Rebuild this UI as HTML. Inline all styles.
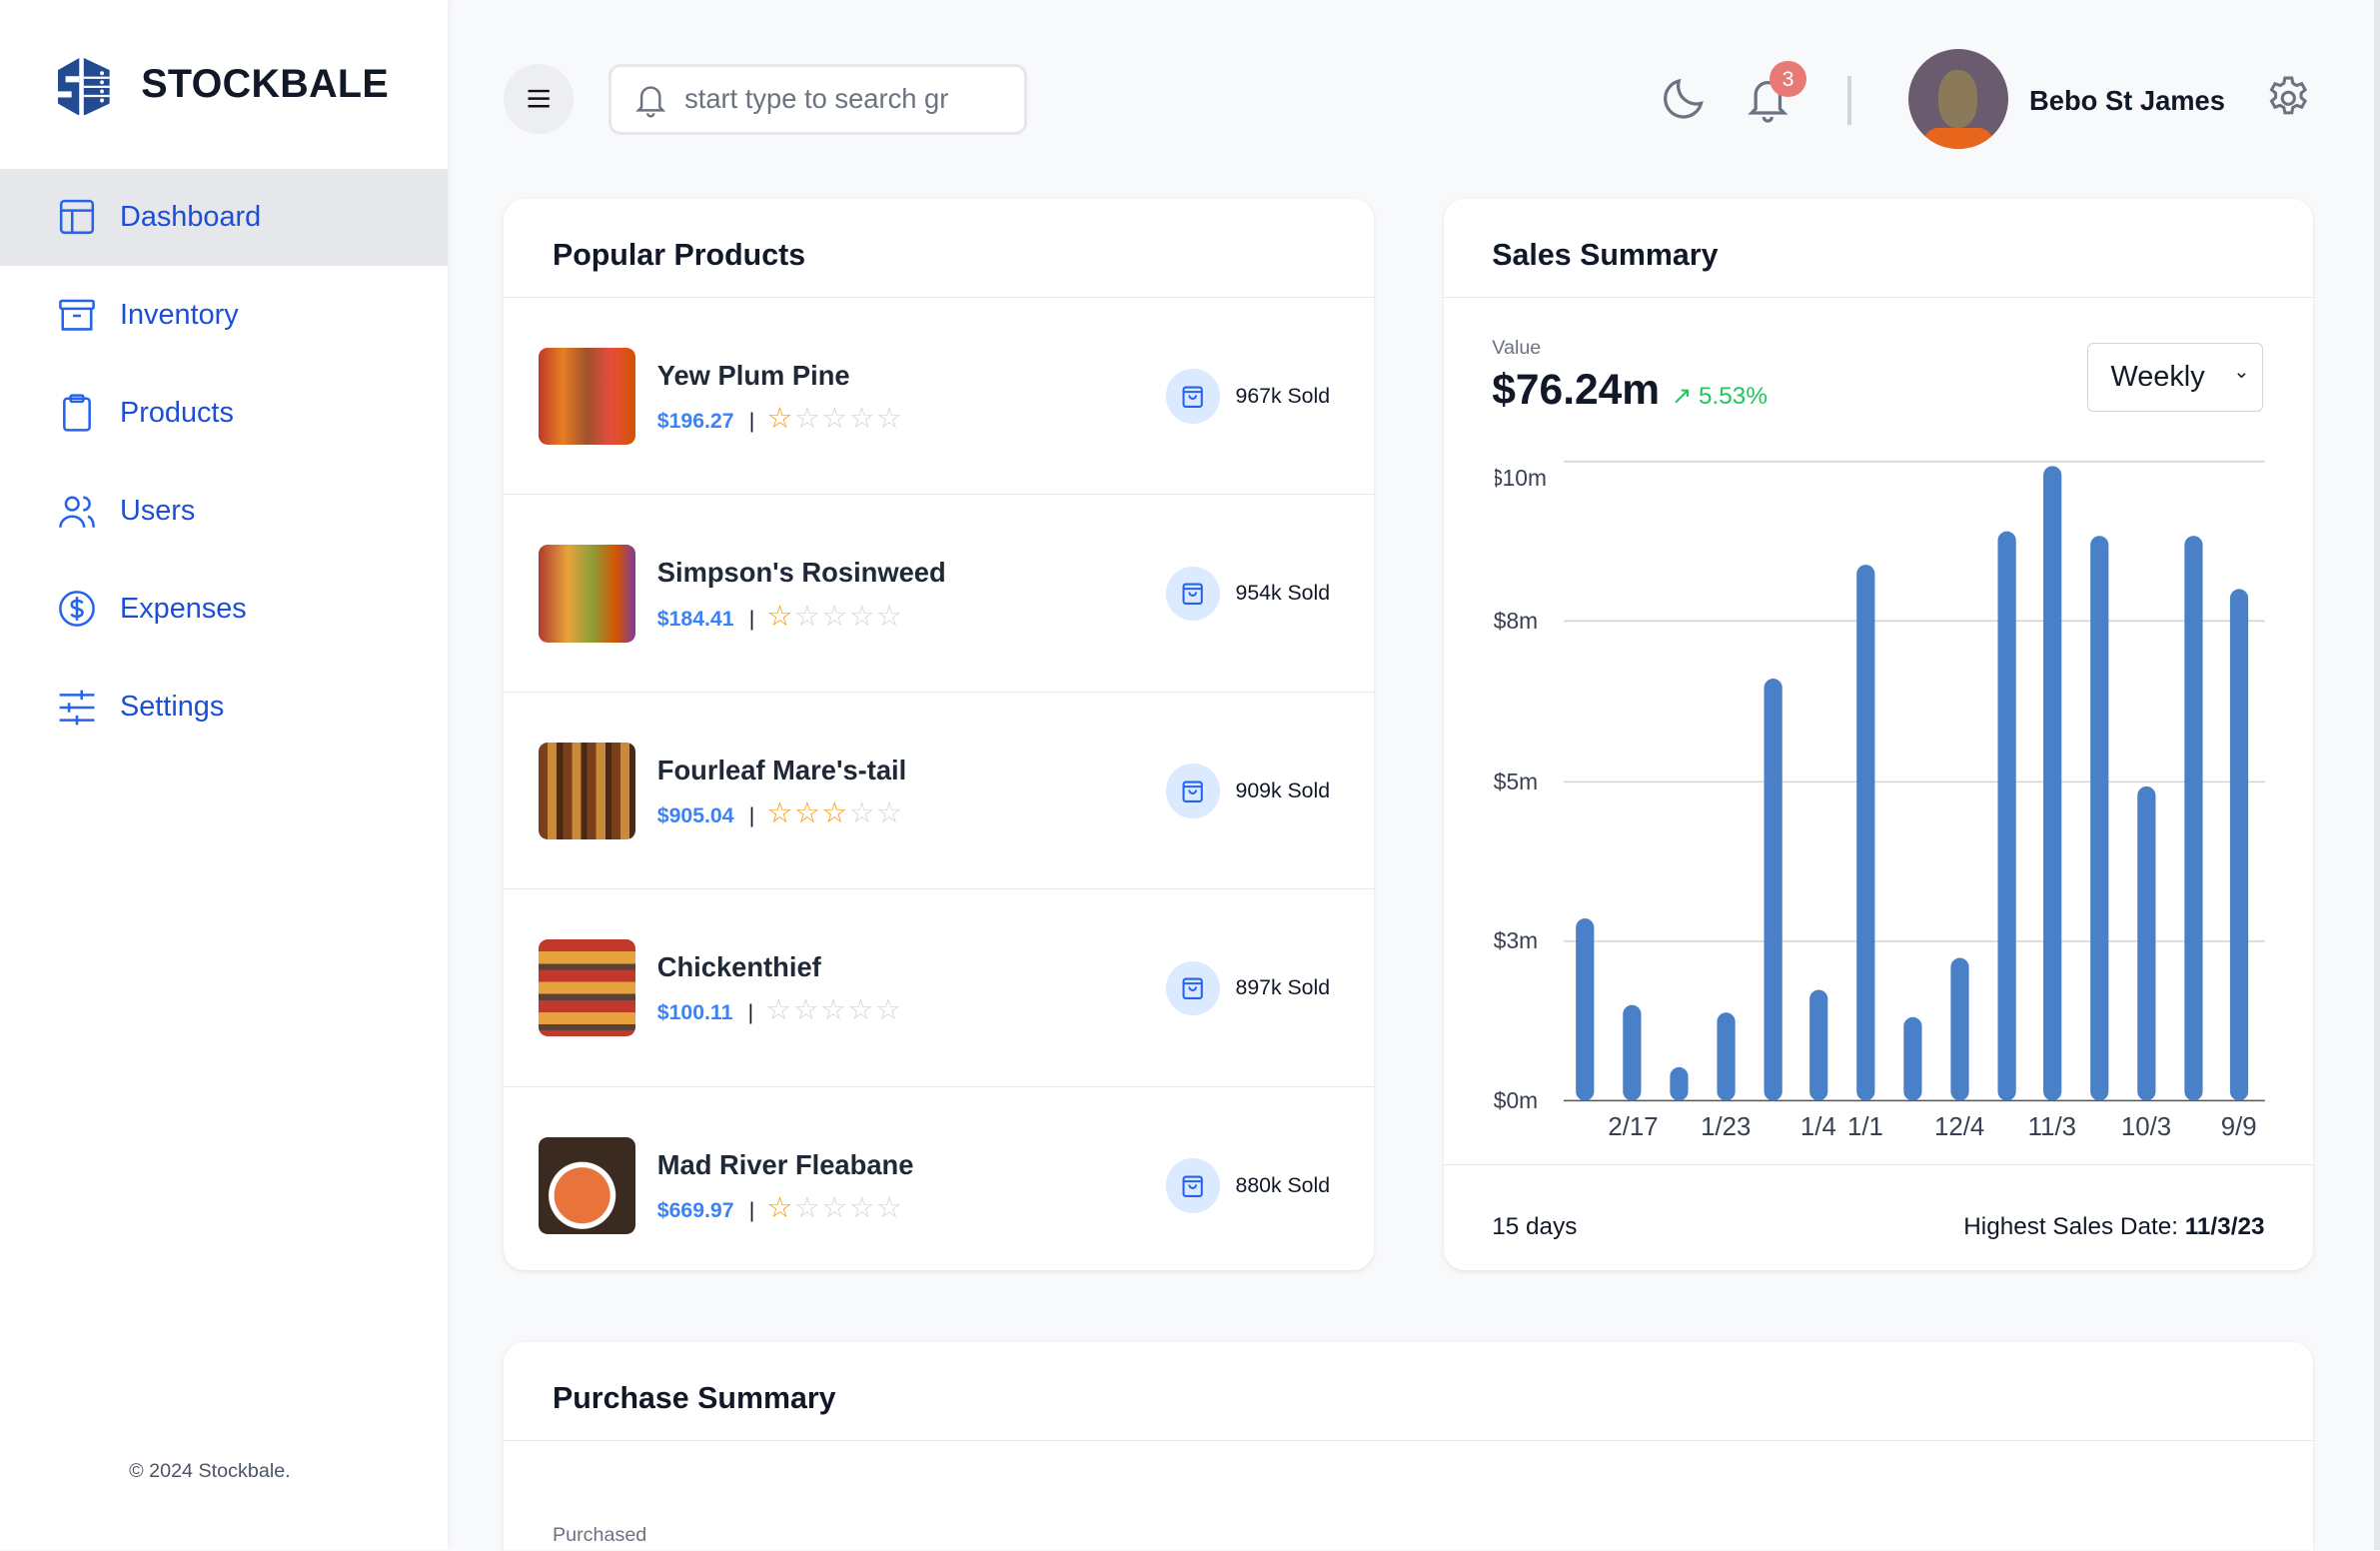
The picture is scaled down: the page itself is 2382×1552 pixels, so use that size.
<!DOCTYPE html>
<html><head><meta charset="utf-8"><style>
*{box-sizing:border-box;margin:0;padding:0}
html,body{width:2382px;height:1552px;overflow:hidden}
body{font-family:"Liberation Sans",Arial,sans-serif;background:#f8f9fb}
#r{zoom:1.5191;width:1568px;height:1021px;position:relative;overflow:hidden;background:#f8f9fb;color:#111827}
.sb{position:absolute;left:0;top:0;width:295px;height:1021px;background:#fff;box-shadow:1px 0 4px rgba(0,0,0,.05)}
.logo{position:absolute;left:38px;top:38px}
.brand{position:absolute;left:93px;top:41px;font-size:26px;font-weight:700;color:#111827;letter-spacing:.2px}
.nav{position:absolute;left:0;width:295px;height:64px;display:flex;align-items:center;padding-left:38px;font-size:19px;color:#1d4ed8}
.nav svg{margin-right:16px}
.nav.act{background:#e5e7eb}
.copy{position:absolute;left:85px;top:962px;font-size:13px;color:#4b5563}
.card{position:absolute;background:#fff;border-radius:14px;box-shadow:0 1px 4px rgba(0,0,0,.08)}
.ch{height:65px;border-bottom:1px solid #e5e7eb;padding:26px 32px 0;font-size:20px;font-weight:700}
.prow{height:130px;border-bottom:1px solid #e5e7eb;position:relative}
.img{position:absolute;left:23px;top:33px;width:64px;height:64px;border-radius:6px}
.pn{position:absolute;left:101px;top:41px;font-size:18px;font-weight:700;color:#1f2937}
.pp{position:absolute;left:101px;top:68px;font-size:14px;font-weight:700;color:#3b82f6}
.pp span{color:#111827;font-weight:400;margin:0 8px 0 10px}
.st{color:#f59e0b;letter-spacing:1px;font-size:19px;font-weight:400}
.st i{font-style:normal;color:#d1d5db}
.sold{position:absolute;left:436px;top:47px;display:flex;align-items:center;font-size:14px;color:#111827}
.bag{width:36px;height:36px;border-radius:50%;background:#dbeafe;display:flex;align-items:center;justify-content:center;margin-right:10px}
.yl{position:absolute;font-size:15px;color:#374151;right:0}
.xl{position:absolute;top:733px;font-size:17px;color:#374151;transform:translateX(-50%)}
</style></head><body><div id="r">
<div class="sb">
<svg class="logo" width="36" height="38" viewBox="0 0 36 38"><polygon points="14,0 0,8 0,30 14,38" fill="#234b92"/><polygon points="17,0 34,8 34,30 17,38" fill="#234b92"/><rect x="5" y="12" width="9" height="4" fill="#fff"/><rect x="0" y="22" width="9" height="4" fill="#fff"/><line x1="17" y1="13" x2="34" y2="13" stroke="#fff" stroke-width="1.5"/><line x1="17" y1="19" x2="34" y2="19" stroke="#fff" stroke-width="1.5"/><line x1="17" y1="25" x2="34" y2="25" stroke="#fff" stroke-width="1.5"/><circle cx="29" cy="10" r="1.3" fill="#fff"/><circle cx="29" cy="16" r="1.3" fill="#fff"/><circle cx="29" cy="22" r="1.3" fill="#fff"/><circle cx="29" cy="28" r="1.3" fill="#fff"/></svg>
<div class="brand">STOCKBALE</div>
<div class="nav act" style="top:111px"><svg width="25" height="25" viewBox="0 0 24 24" fill="none" stroke="#2563eb" stroke-width="1.6"><rect x="2" y="2" width="20" height="20" rx="2"/><path d="M2 8h20M9 8v14"/></svg>Dashboard</div>
<div class="nav" style="top:176px"><svg width="25" height="25" viewBox="0 0 24 24" fill="none" stroke="#2563eb" stroke-width="1.6"><rect x="1.5" y="2.5" width="21" height="5" rx="1"/><path d="M3 7.5v13h18v-13M9.5 12h5"/></svg>Inventory</div>
<div class="nav" style="top:240px"><svg width="25" height="25" viewBox="0 0 24 24" fill="none" stroke="#2563eb" stroke-width="1.6"><rect x="4" y="3" width="16" height="20" rx="2"/><rect x="8" y="1" width="8" height="4" rx="1"/></svg>Products</div>
<div class="nav" style="top:305px"><svg width="25" height="25" viewBox="0 0 24 24" fill="none" stroke="#2563eb" stroke-width="1.6"><circle cx="9" cy="7" r="4"/><path d="M1.5 22c0-4 3.5-7 7.5-7s7.5 3 7.5 7M16 3a4 4 0 010 8M19 15c2.5 1 3.5 3.5 3.5 7"/></svg>Users</div>
<div class="nav" style="top:369px"><svg width="25" height="25" viewBox="0 0 24 24" fill="none" stroke="#2563eb" stroke-width="1.6"><circle cx="12" cy="12" r="10.5"/><path d="M15.5 8.5c-.5-1-1.8-1.5-3.5-1.5-2 0-3.3 1-3.3 2.5s1.3 2 3.3 2.5 3.5 1 3.5 2.5-1.5 2.5-3.5 2.5c-1.8 0-3-.6-3.6-1.6M12 4.5v15"/></svg>Expenses</div>
<div class="nav" style="top:434px"><svg width="25" height="25" viewBox="0 0 24 24" fill="none" stroke="#2563eb" stroke-width="1.6"><path d="M1 4h22M1 12h22M1 20h22"/><path d="M15 1v6M7 9v6M12 17v6" /></svg>Settings</div>
<div class="copy">© 2024 Stockbale.</div>
</div>

<div style="position:absolute;left:332px;top:42px;width:46px;height:46px;border-radius:50%;background:#eceef1;display:flex;align-items:center;justify-content:center"><svg width="16" height="14" viewBox="0 0 16 14" stroke="#111" stroke-width="1.6"><path d="M1 2h14M1 7h14M1 12h14"/></svg></div>
<div style="position:absolute;left:401px;top:42px;width:276px;height:47px;border:2px solid #e5e7eb;border-radius:8px;background:#fff;display:flex;align-items:center;padding-left:14px;font-size:18px;color:#6b7280"><svg width="24" height="26" viewBox="0 0 24 24" fill="none" stroke="#6b7280" stroke-width="1.6" style="margin-right:10px"><path d="M6 17V10a6 6 0 0112 0v7l2 2H4z M10 21a2 2 0 004 0"/></svg>start type to search gr</div>
<svg style="position:absolute;left:1094px;top:48px" width="32" height="32" viewBox="0 0 24 24" fill="none" stroke="#6b7280" stroke-width="1.6"><path d="M20 15A9 9 0 019 4a9 9 0 1011 11z"/></svg>
<svg style="position:absolute;left:1149px;top:48px" width="32" height="34" viewBox="0 0 24 24" fill="none" stroke="#6b7280" stroke-width="1.6"><path d="M6 17V10a6 6 0 0112 0v7l2 2H4z M10 21a2 2 0 004 0"/></svg>
<div style="position:absolute;left:1166px;top:40px;width:24px;height:24px;border-radius:50%;background:#e87a75;color:#fff;font-size:14px;text-align:center;line-height:24px">3</div>
<div style="position:absolute;left:1217px;top:50px;width:3px;height:32px;background:#d1d5db"></div>
<div style="position:absolute;left:1257px;top:32px;width:66px;height:66px;border-radius:50%;background:#6b5b6e;overflow:hidden"><div style="position:absolute;left:20px;top:14px;width:26px;height:38px;border-radius:45%;background:#8a7a5a"></div><div style="position:absolute;left:10px;top:52px;width:46px;height:20px;border-radius:10px;background:#e8651c"></div></div>
<div style="position:absolute;left:1337px;top:56px;font-size:18px;font-weight:700;color:#111827">Bebo St James</div>
<svg style="position:absolute;left:1492px;top:49px" width="32" height="32" viewBox="0 0 24 24" fill="none" stroke="#6b7280" stroke-width="1.5"><path d="M10.3 2h3.4l.5 2.6 1.9 1.1 2.5-.9 1.7 3-2 1.7v2.2l2 1.7-1.7 3-2.5-.9-1.9 1.1-.5 2.6h-3.4l-.5-2.6-1.9-1.1-2.5.9-1.7-3 2-1.7v-2.2l-2-1.7 1.7-3 2.5.9 1.9-1.1z"/><circle cx="12" cy="12" r="3"/></svg>

<div class="card" style="left:332px;top:131px;width:573px;height:706px;overflow:hidden">
<div class="ch">Popular Products</div>
<div class="prow"><div class="img" style="background:linear-gradient(90deg,#c0392b,#e67e22 25%,#a0522d 50%,#e74c3c 75%,#d35400)"></div><div class="pn">Yew Plum Pine</div><div class="pp">$196.27<span>|</span><b class="st">☆<i>☆☆☆☆</i></b></div><div class="sold"><div class="bag"><svg width="18" height="18" viewBox="0 0 24 24" fill="none" stroke="#2563eb" stroke-width="1.8"><rect x="4" y="4" width="16" height="17" rx="2"/><path d="M4 8h16M9 11a3 3 0 006 0"/></svg></div>967k Sold</div></div>
<div class="prow"><div class="img" style="background:linear-gradient(90deg,#b03a2e,#e9a23b 30%,#8e9f3a 55%,#d35400 80%,#7d3c98)"></div><div class="pn">Simpson's Rosinweed</div><div class="pp">$184.41<span>|</span><b class="st">☆<i>☆☆☆☆</i></b></div><div class="sold"><div class="bag"><svg width="18" height="18" viewBox="0 0 24 24" fill="none" stroke="#2563eb" stroke-width="1.8"><rect x="4" y="4" width="16" height="17" rx="2"/><path d="M4 8h16M9 11a3 3 0 006 0"/></svg></div>954k Sold</div></div>
<div class="prow"><div class="img" style="background:repeating-linear-gradient(90deg,#7b3f1c 0 6px,#c98a3a 6px 12px,#4a2a14 12px 16px)"></div><div class="pn">Fourleaf Mare's-tail</div><div class="pp">$905.04<span>|</span><b class="st">☆☆☆<i>☆☆</i></b></div><div class="sold"><div class="bag"><svg width="18" height="18" viewBox="0 0 24 24" fill="none" stroke="#2563eb" stroke-width="1.8"><rect x="4" y="4" width="16" height="17" rx="2"/><path d="M4 8h16M9 11a3 3 0 006 0"/></svg></div>909k Sold</div></div>
<div class="prow"><div class="img" style="background:repeating-linear-gradient(180deg,#c0392b 0 8px,#e6a23c 8px 16px,#5d4037 16px 20px)"></div><div class="pn">Chickenthief</div><div class="pp">$100.11<span>|</span><b class="st"><i>☆☆☆☆☆</i></b></div><div class="sold"><div class="bag"><svg width="18" height="18" viewBox="0 0 24 24" fill="none" stroke="#2563eb" stroke-width="1.8"><rect x="4" y="4" width="16" height="17" rx="2"/><path d="M4 8h16M9 11a3 3 0 006 0"/></svg></div>897k Sold</div></div>
<div class="prow" style="border:none"><div class="img" style="background:radial-gradient(circle at 45% 60%,#e8743b 0 35%,#fff 36% 42%,#3b2a20 43%)"></div><div class="pn">Mad River Fleabane</div><div class="pp">$669.97<span>|</span><b class="st">☆<i>☆☆☆☆</i></b></div><div class="sold"><div class="bag"><svg width="18" height="18" viewBox="0 0 24 24" fill="none" stroke="#2563eb" stroke-width="1.8"><rect x="4" y="4" width="16" height="17" rx="2"/><path d="M4 8h16M9 11a3 3 0 006 0"/></svg></div>880k Sold</div></div>
</div>

<div class="card" style="left:951px;top:131px;width:573px;height:706px;overflow:hidden">
<div class="ch">Sales Summary</div>
<div style="position:absolute;left:32px;top:91px;font-size:13px;color:#6b7280">Value</div>
<div style="position:absolute;left:32px;top:110px;font-size:28px;font-weight:700">$76.24m <span style="font-size:16px;font-weight:400;color:#22c55e">↗ 5.53%</span></div>
<div style="position:absolute;left:424px;top:95px;width:116px;height:45px;border:1px solid #d1d5db;border-radius:4px;font-size:19px;padding:11px 0 0 15px">Weekly<span style="position:absolute;right:8px;top:10px;font-size:13px">⌄</span></div>
<div style="position:absolute;left:0;top:636px;width:573px;border-top:1px solid #e5e7eb"></div>
<div style="position:absolute;left:32px;top:668px;font-size:16px">15 days</div>
<div style="position:absolute;right:32px;top:668px;font-size:16px">Highest Sales Date: <b>11/3/23</b></div>
</div>
<div style="position:absolute;left:951px;top:0;width:573px;height:760px">
<svg style="position:absolute;left:0;top:0" width="573" height="760">
<g stroke="#d1d5db" stroke-width="1"><line x1="79" y1="304" x2="541" y2="304"/><line x1="79" y1="409" x2="541" y2="409"/><line x1="79" y1="515" x2="541" y2="515"/><line x1="79" y1="620" x2="541" y2="620"/></g>
<line x1="79" y1="725" x2="541" y2="725" stroke="#555"/>
<g fill="#4a80c8">
<rect x="87" y="605" width="12" height="120" rx="6"/><rect x="118" y="662" width="12" height="63" rx="6"/><rect x="149" y="703" width="12" height="22" rx="6"/><rect x="180" y="667" width="12" height="58" rx="6"/><rect x="211" y="447" width="12" height="278" rx="6"/><rect x="241" y="652" width="12" height="73" rx="6"/><rect x="272" y="372" width="12" height="353" rx="6"/><rect x="303" y="670" width="12" height="55" rx="6"/><rect x="334" y="631" width="12" height="94" rx="6"/><rect x="365" y="350" width="12" height="375" rx="6"/><rect x="395" y="307" width="12" height="418" rx="6"/><rect x="426" y="353" width="12" height="372" rx="6"/><rect x="457" y="518" width="12" height="207" rx="6"/><rect x="488" y="353" width="12" height="372" rx="6"/><rect x="518" y="388" width="12" height="337" rx="6"/>
</g></svg>
<div class="yl" style="left:34px;top:306px;width:34px;text-align:right;overflow:hidden;direction:rtl">$10m</div>
<div class="yl" style="left:33px;top:400px">$8m</div>
<div class="yl" style="left:33px;top:506px">$5m</div>
<div class="yl" style="left:33px;top:611px">$3m</div>
<div class="yl" style="left:33px;top:716px">$0m</div>
<div class="xl" style="left:125px">2/17</div><div class="xl" style="left:186px">1/23</div><div class="xl" style="left:247px">1/4</div><div class="xl" style="left:278px">1/1</div><div class="xl" style="left:340px">12/4</div><div class="xl" style="left:401px">11/3</div><div class="xl" style="left:463px">10/3</div><div class="xl" style="left:524px">9/9</div>
</div>

<div class="card" style="left:332px;top:884px;width:1192px;height:137px;border-radius:14px 14px 0 0">
<div class="ch">Purchase Summary</div>
<div style="position:absolute;left:32px;top:120px;font-size:13px;color:#6b7280">Purchased</div>
</div>
<div style="position:absolute;left:1564px;top:0;width:4px;height:1021px;background:#e5e7eb"></div>
</div></body></html>
